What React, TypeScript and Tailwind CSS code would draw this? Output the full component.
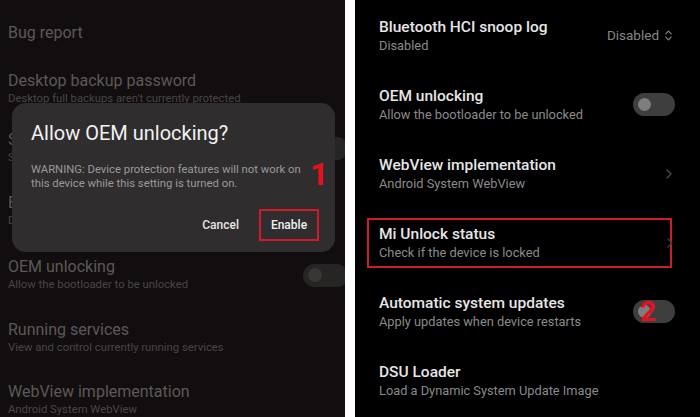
import { ChevronRight, ChevronsUpDown } from 'lucide-react';

const font = { fontFamily: 'Roboto, "Noto Sans", sans-serif' };

// left panel: dimmed settings list behind the dialog
function DimRow({ title, sub, h, toggle }: { title: string; sub?: string; h: string; toggle?: boolean }) {
  return (
    <div className={`flex items-center justify-between pl-[8px] ${h}`}>
      <div className="flex flex-col">
        <span className="text-[16px] leading-[20px] text-[#5d5858]">{title}</span>
        {sub && <span className="text-[11.3px] leading-[16px] text-[#4a4545] whitespace-nowrap">{sub}</span>}
      </div>
      {toggle && (
        <div className="mr-[-3px] flex h-[23px] w-[45px] shrink-0 items-center rounded-full bg-[#272424] pl-[5px]">
          <div className="h-[14px] w-[14px] rounded-full bg-[#3a3636]" />
        </div>
      )}
    </div>
  );
}

function Toggle({ children }: { children?: React.ReactNode }) {
  return (
    <div className="relative flex h-[23px] w-[42px] items-center rounded-full bg-[#3e3e3e] pl-[5px]">
      <div className="h-[13px] w-[13px] rounded-full bg-[#7e7e7e]" />
      {children}
    </div>
  );
}

function Row({ title, sub, right }: { title: string; sub: string; right?: React.ReactNode }) {
  return (
    <div className="flex h-[69px] items-center justify-between pl-[24px] pr-[25px]">
      <div className="flex flex-col">
        <span className="text-[15.5px] font-medium leading-[20px] text-[#e6e6e6]">{title}</span>
        <span className="text-[12.8px] leading-[18px] text-[#8a8a8a]">{sub}</span>
      </div>
      {right}
    </div>
  );
}

export default function App() {
  return (
    <div className="flex h-[417px] w-[700px] overflow-hidden" style={font}>
      <div className="relative w-[345px] shrink-0 overflow-hidden bg-[#120e0f]">
        <div className="flex flex-col pt-[5px]">
          <DimRow title="Bug report" h="h-[56px]" />
          <DimRow title="Desktop backup password" sub="Desktop full backups aren't currently protected" h="h-[56px]" />
          <DimRow title="Stay awake" sub="Screen will never sleep while charging" h="h-[62px]" toggle />
          <DimRow title="Enable Bluetooth HCI snoop log" sub="Disabled" h="h-[64px]" />
          <DimRow title="OEM unlocking" sub="Allow the bootloader to be unlocked" h="h-[64px]" toggle />
          <DimRow title="Running services" sub="View and control currently running services" h="h-[62px]" />
          <DimRow title="WebView implementation" sub="Android System WebView" h="h-[62px]" />
        </div>

        {/* dialog */}
        <div className="absolute left-[12px] top-[103px] flex h-[149px] w-[323px] flex-col rounded-[14px] bg-[#2f2d2e] pl-[19px] pr-[16px] pt-[17px]">
          <span className="text-[20px] leading-[26px] text-[#f2f2f2]">Allow OEM unlocking?</span>
          <p className="mt-[17px] text-[11.3px] leading-[14px] text-[#9c9a9a]">
            WARNING: Device protection features will not work on this device while this setting is turned on.
          </p>
          <div className="mt-auto mb-[11px] flex items-center justify-end gap-[20px]">
            <span className="text-[12px] font-medium text-[#e6e6e6]">Cancel</span>
            <div className="flex h-[32px] w-[60px] items-center justify-center border-2 border-[#d21b2a]">
              <span className="text-[12px] font-medium text-[#f0f0f0]">Enable</span>
            </div>
          </div>
        </div>
        <span className="absolute left-[310px] top-[156px] text-[32px] font-bold leading-[36px] text-[#e8101c]">1</span>
      </div>

      <div className="w-[10px] shrink-0 bg-white" />

      <div className="flex flex-1 flex-col bg-black pt-[1px]">
        <Row
          title="Bluetooth HCI snoop log"
          sub="Disabled"
          right={
            <div className="flex items-center gap-[3px] text-[13.5px] text-[#858585]">
              Disabled
              <ChevronsUpDown size={13} strokeWidth={2.2} />
            </div>
          }
        />
        <Row title="OEM unlocking" sub="Allow the bootloader to be unlocked" right={<Toggle />} />
        <Row
          title="WebView implementation"
          sub="Android System WebView"
          right={<ChevronRight size={16} className="mr-[-2px] text-[#4a4a4a]" />}
        />
        <div className="flex h-[69px] items-center pl-[12px]">
          <div className="flex h-[50px] w-[305px] items-center justify-between border-2 border-[#cc1d2b] pl-[10px]">
            <div className="flex flex-col">
              <span className="text-[15.5px] font-medium leading-[20px] text-[#e6e6e6]">Mi Unlock status</span>
              <span className="text-[12.8px] leading-[18px] text-[#8a8a8a]">Check if the device is locked</span>
            </div>
            <ChevronRight size={16} className="mr-[-8px] text-[#3c3c3c]" />
          </div>
        </div>
        <Row
          title="Automatic system updates"
          sub="Apply updates when device restarts"
          right={
            <Toggle>
              <span className="absolute left-[7px] top-[-4px] text-[28px] font-bold leading-[32px] text-[#e8101c]">2</span>
            </Toggle>
          }
        />
        <Row title="DSU Loader" sub="Load a Dynamic System Update Image" />
      </div>
    </div>
  );
}
